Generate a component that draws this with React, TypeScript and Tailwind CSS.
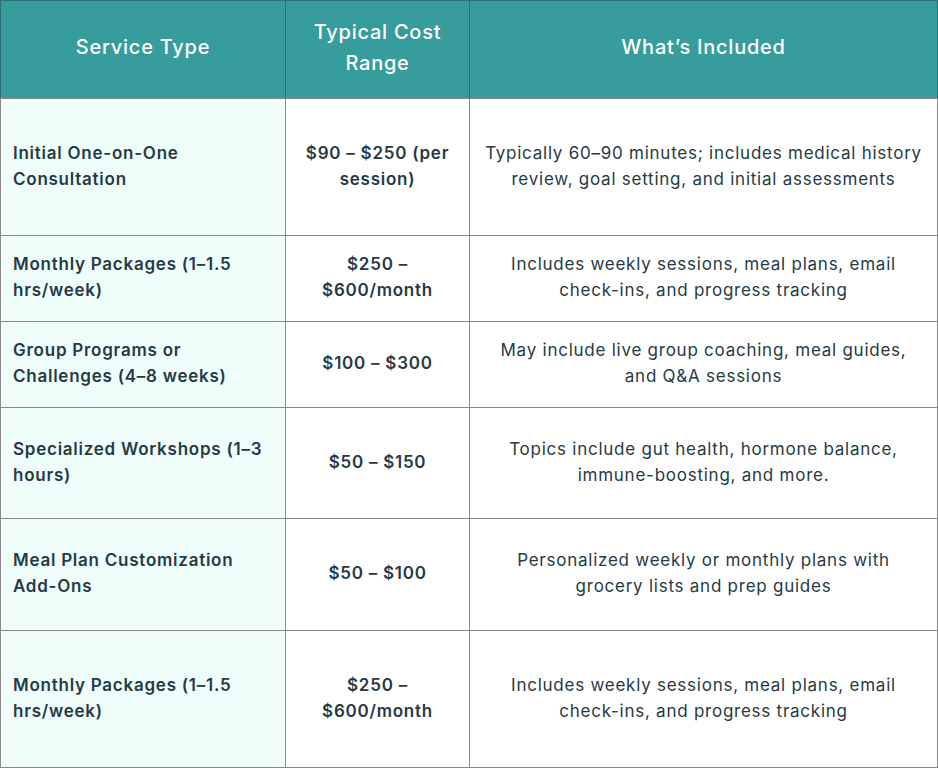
import React from "react";

const rows = [
  { h: "h-[137px]", a: "Initial One-on-One Consultation", b: "$90 – $250 (per session)", c: "Typically 60–90 minutes; includes medical history review, goal setting, and initial assessments" },
  { h: "h-[86px]", a: "Monthly Packages (1–1.5 hrs/week)", b: "$250 – $600/month", c: "Includes weekly sessions, meal plans, email check-ins, and progress tracking" },
  { h: "h-[86px]", a: "Group Programs or Challenges (4–8 weeks)", b: "$100 – $300", c: "May include live group coaching, meal guides, and Q&A sessions" },
  { h: "h-[111px]", a: "Specialized Workshops (1–3 hours)", b: "$50 – $150", c: "Topics include gut health, hormone balance, immune-boosting, and more." },
  { h: "h-[112px]", a: "Meal Plan Customization Add-Ons", b: "$50 – $100", c: "Personalized weekly or monthly plans with grocery lists and prep guides" },
  { h: "h-[137px]", a: "Monthly Packages (1–1.5 hrs/week)", b: "$250 – $600/month", c: "Includes weekly sessions, meal plans, email check-ins, and progress tracking" },
];

export default function App() {
  return (
    <div className="w-[938px] h-[768px] bg-white font-['Inter',sans-serif] text-[#263a45] tracking-[0.047em]">
      <table className="w-[937px] border-collapse table-fixed">
        <colgroup>
          <col className="w-[285px]" />
          <col className="w-[184px]" />
          <col className="w-[468px]" />
        </colgroup>
        <thead>
          <tr className="h-[98px] bg-[#369c9c] text-white text-[20px] leading-[31px] font-medium">
            <th className="border border-[#2f6f70] border-b-[#8a8a8a] px-3 pb-[4px] font-medium text-center">Service Type</th>
            <th className="border border-[#2f6f70] border-b-[#8a8a8a] px-3 pb-[4px] font-medium text-center">Typical Cost Range</th>
            <th className="border border-[#2f6f70] border-b-[#8a8a8a] px-3 pb-[4px] font-medium text-center">What’s Included</th>
          </tr>
        </thead>
        <tbody className="text-[17px] leading-[26px]">
          {rows.map((r, i) => (
            <tr key={i} className={r.h}>
              <td className="border border-[#8a8a8a] bg-[#effefb] pl-3 pr-3 pb-[3px] font-semibold text-left align-middle">{r.a}</td>
              <td className="border border-[#8a8a8a] px-4 pb-[3px] font-semibold text-center align-middle">{r.b}</td>
              <td className="border border-[#8a8a8a] px-3 pb-[3px] text-center align-middle">{r.c}</td>
            </tr>
          ))}
        </tbody>
      </table>
    </div>
  );
}
